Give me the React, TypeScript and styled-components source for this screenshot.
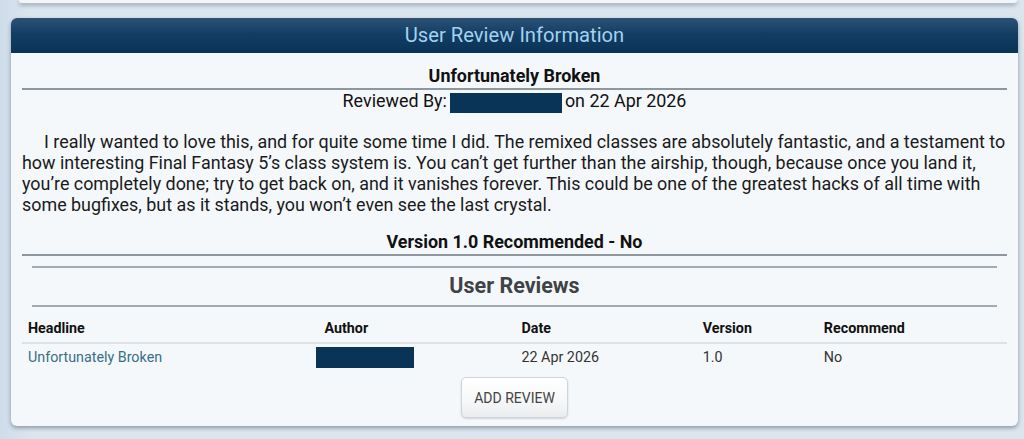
import React from "react";
import styled, { createGlobalStyle } from "styled-components";

const GlobalStyle = createGlobalStyle`
  html, body {
    margin: 0;
    padding: 0;
  }
  body {
    background: #d7e2ec;
    font-family: Roboto, "Liberation Sans", sans-serif;
    color: #111;
  }
`;

const reviews = [
  {
    headline: "Unfortunately Broken",
    date: "22 Apr 2026",
    version: "1.0",
    recommend: "No",
  },
];

const App = () => {
  return (
    <Page>
      <GlobalStyle />
      <PrevCard />
      <Card>
        <CardHeader>User Review Information</CardHeader>
        <CardBody>
          <ReviewTitle>Unfortunately Broken</ReviewTitle>
          <Rule />
          <Byline>
            Reviewed By:
            <Redacted $width={112} $height={20} />
            on 22 Apr 2026
          </Byline>
          <ReviewText>
            I really wanted to love this, and for quite some time I did. The
            remixed classes are absolutely fantastic, and a testament to how
            interesting Final Fantasy 5’s class system is. You can’t get further
            than the airship, though, because once you land it, you’re
            completely done; try to get back on, and it vanishes forever. This
            could be one of the greatest hacks of all time with some bugfixes,
            but as it stands, you won’t even see the last crystal.
          </ReviewText>
          <Verdict>Version 1.0 Recommended - No</Verdict>
          <Rule />
          <Section>
            <SectionTitle>User Reviews</SectionTitle>
          </Section>
          <Table>
            <colgroup>
              <col style={{ width: "30.1%" }} />
              <col style={{ width: "20%" }} />
              <col style={{ width: "18.4%" }} />
              <col style={{ width: "12.3%" }} />
              <col />
            </colgroup>
            <thead>
              <tr>
                <Th>Headline</Th>
                <Th>Author</Th>
                <Th>Date</Th>
                <Th>Version</Th>
                <Th>Recommend</Th>
              </tr>
            </thead>
            <tbody>
              {reviews.map((r) => (
                <tr key={r.headline}>
                  <Td>
                    <ReviewLink href="#">{r.headline}</ReviewLink>
                  </Td>
                  <Td>
                    <Redacted $width={98} $height={21} $offset={-8} />
                  </Td>
                  <Td>{r.date}</Td>
                  <Td>{r.version}</Td>
                  <Td>{r.recommend}</Td>
                </tr>
              ))}
            </tbody>
          </Table>
          <Actions>
            <AddButton>Add Review</AddButton>
          </Actions>
        </CardBody>
      </Card>
    </Page>
  );
};

export default App;

const Page = styled.div`
  min-height: 439px;
  padding: 0 6px 14px 11px;
  box-sizing: border-box;
  background: linear-gradient(90deg, #cfdcea 0%, #dbe5ee 3%, #dbe5ee 100%);
`;

const PrevCard = styled.div`
  height: 3px;
  background: #f3f6f9;
  border-radius: 0 0 6px 6px;
  box-shadow: 0 2px 4px rgba(40, 60, 80, 0.45);
  margin: 0 1px 15px 8px;
`;

const Card = styled.div`
  background: #f5f8fb;
  border-radius: 6px;
  box-shadow: 0 2px 4px rgba(40, 60, 80, 0.45);
  overflow: hidden;
`;

const CardHeader = styled.div`
  height: 35px;
  line-height: 35px;
  text-align: center;
  font-size: 20.2px;
  color: #a3d2ef;
  background: linear-gradient(180deg, #2d5175 0%, #133e64 45%, #0a3257 100%);
`;

const CardBody = styled.div`
  padding: 11px 11px 8px;
`;

const ReviewTitle = styled.div`
  text-align: center;
  font-size: 17.9px;
  font-weight: 700;
  line-height: 21px;
  margin-top: 1px;
  margin-bottom: 2px;
`;

const Rule = styled.div`
  height: 2px;
  background: #8d979d;
`;

const Byline = styled.div`
  display: flex;
  justify-content: center;
  align-items: center;
  font-size: 17.9px;
  line-height: 21px;
`;

const Redacted = styled.span<{ $width: number; $height: number; $offset?: number }>`
  display: inline-block;
  flex-shrink: 0;
  width: ${(p) => p.$width}px;
  height: ${(p) => p.$height}px;
  background: #0a3358;
  margin-left: ${(p) => (p.$offset !== undefined ? p.$offset : 3)}px;
  margin-right: ${(p) => (p.$offset !== undefined ? 0 : 3)}px;
  vertical-align: middle;
  position: relative;
  top: ${(p) => (p.$offset !== undefined ? 0 : 2)}px;
`;

const ReviewText = styled.p`
  margin: 20px -14px 0 0;
  font-size: 17.9px;
  line-height: 21px;
  text-indent: 22px;
  color: #1a1a1a;
`;

const Verdict = styled.div`
  margin-top: 16px;
  text-align: center;
  font-size: 17.9px;
  font-weight: 700;
  line-height: 21px;
  margin-bottom: 2px;
`;

const Section = styled.div`
  margin: 10px 10px 0;
  border-top: 2px solid #a3abb0;
  border-bottom: 2px solid #a3abb0;
  padding: 5px 0 6px;
`;

const SectionTitle = styled.h2`
  margin: 0;
  text-align: center;
  font-size: 21.5px;
  font-weight: 700;
  line-height: 26px;
  color: #3f4346;
`;

const Table = styled.table`
  width: 100%;
  border-collapse: collapse;
  table-layout: fixed;
  margin-top: 9px;
  font-size: 14.3px;
`;

const Th = styled.th`
  text-align: left;
  font-weight: 700;
  padding: 4px 6px 5px;
  line-height: 17px;
  color: #111;
  border-bottom: 2px solid #dde2e6;
`;

const Td = styled.td`
  padding: 3px 6px;
  line-height: 17px;
  height: 24px;
  box-sizing: border-box;
  color: #333;
  vertical-align: middle;
`;

const ReviewLink = styled.a`
  color: #357088;
  text-decoration: none;
`;

const Actions = styled.div`
  display: flex;
  justify-content: center;
  margin-top: 6px;
`;

const AddButton = styled.button`
  width: 107px;
  height: 41px;
  font-family: Roboto, "Liberation Sans", sans-serif;
  font-size: 14px;
  text-transform: uppercase;
  color: #444;
  background: linear-gradient(180deg, #ffffff 0%, #f6f7f8 60%, #e9ecef 100%);
  border: 1px solid #cfd4d8;
  border-radius: 5px;
  box-shadow: 0 1px 2px rgba(0, 0, 0, 0.15);
  cursor: pointer;
`;
